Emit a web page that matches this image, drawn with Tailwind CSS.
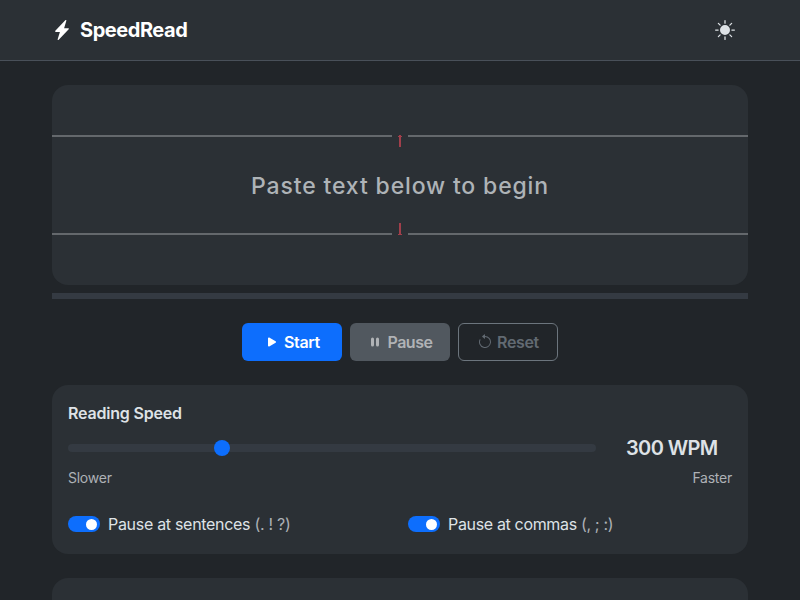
<!DOCTYPE html>
<html lang="en">
<head>
    <meta charset="UTF-8">
    <meta name="viewport" content="width=device-width, initial-scale=1.0">
    <title>SpeedRead</title>
    <script src="https://cdn.jsdelivr.net/npm/@tailwindcss/browser@4"></script>
</head>

<body class="flex flex-col bg-[#212529] text-[#dee2e6] h-screen overflow-hidden font-['Inter',sans-serif]">
    <header class="shrink-0 h-[61px] bg-[#2b3035] border-b border-[#495059]">
        <div class="flex items-center justify-between h-full px-[52px]">
            <a href="#" class="flex items-center text-white">
                <svg class="w-5 h-5 mr-2" viewBox="0 0 16 16" fill="currentColor">
                    <path d="M11.251.068a.5.5 0 0 1 .227.58L9.677 6.5H13a.5.5 0 0 1 .364.843l-8 8.5a.5.5 0 0 1-.842-.49L6.323 9.5H3a.5.5 0 0 1-.364-.843l8-8.5a.5.5 0 0 1 .615-.09z"/>
                </svg>
                <span class="text-xl font-bold tracking-[-0.45px]">SpeedRead</span>
            </a>
            <button type="button" class="mr-[13px]" aria-label="Theme">
                <svg class="w-5 h-5" viewBox="0 0 16 16" fill="currentColor">
                    <path d="M8 12a4 4 0 1 0 0-8 4 4 0 0 0 0 8M8 0a.5.5 0 0 1 .5.5v2a.5.5 0 0 1-1 0v-2A.5.5 0 0 1 8 0m0 13a.5.5 0 0 1 .5.5v2a.5.5 0 0 1-1 0v-2A.5.5 0 0 1 8 13m8-5a.5.5 0 0 1-.5.5h-2a.5.5 0 0 1 0-1h2a.5.5 0 0 1 .5.5M3 8a.5.5 0 0 1-.5.5h-2a.5.5 0 0 1 0-1h2A.5.5 0 0 1 3 8m10.657-5.657a.5.5 0 0 1 0 .707l-1.414 1.415a.5.5 0 1 1-.707-.708l1.414-1.414a.5.5 0 0 1 .707 0m-9.193 9.193a.5.5 0 0 1 0 .707L3.05 13.657a.5.5 0 0 1-.707-.707l1.414-1.414a.5.5 0 0 1 .707 0m9.193 2.121a.5.5 0 0 1-.707 0l-1.414-1.414a.5.5 0 0 1 .707-.707l1.414 1.414a.5.5 0 0 1 0 .707M4.464 4.465a.5.5 0 0 1-.707 0L2.343 3.05a.5.5 0 1 1 .707-.707l1.414 1.414a.5.5 0 0 1 0 .708"/>
                </svg>
            </button>
        </div>
    </header>

    <main class="flex flex-col flex-1 min-h-0 px-[52px] pt-6">
        <!-- reader -->
        <section class="flex flex-col shrink-0 justify-center h-[200px] bg-[#2b3035] rounded-2xl">
            <div class="flex items-start h-3">
                <div class="flex-1 h-0.5 bg-[#64686c]"></div>
                <svg class="w-4 h-3" viewBox="0 0 16 12" fill="#a03f4b">
                    <path d="M7 0h2v12H7zM6 1h4v1H6z"/>
                </svg>
                <div class="flex-1 h-0.5 bg-[#64686c]"></div>
            </div>
            <div class="flex items-center justify-center h-[76px] pt-0.5">
                <span class="text-[23px] font-medium tracking-[0.85px] text-[#aeb3b7]">Paste text below to begin</span>
            </div>
            <div class="flex items-end h-3">
                <div class="flex-1 h-0.5 bg-[#64686c]"></div>
                <svg class="w-4 h-3" viewBox="0 0 16 12" fill="#a03f4b">
                    <path d="M7 0h2v12H7zM6 11h4v1H6z"/>
                </svg>
                <div class="flex-1 h-0.5 bg-[#64686c]"></div>
            </div>
        </section>
        <div class="shrink-0 h-1.5 mt-2 bg-[#343a42]"></div>

        <!-- controls -->
        <div class="flex shrink-0 justify-center gap-2 mt-6">
            <button type="button" class="flex items-center justify-center w-[100px] h-[38px] rounded-md bg-[#0d6efd] text-white font-semibold">
                <svg class="w-4 h-4 mr-1" viewBox="0 0 16 16" fill="currentColor">
                    <path d="m11.596 8.697-6.363 3.692c-.54.313-1.233-.066-1.233-.697V4.308c0-.63.692-1.01 1.233-.696l6.363 3.692a.802.802 0 0 1 0 1.393"/>
                </svg>
                <span class="tracking-[-0.35px]">Start</span>
            </button>
            <button type="button" disabled class="flex items-center justify-center w-[100px] h-[38px] rounded-md bg-[#51585f] text-[#b0b3b6] font-semibold">
                <svg class="w-4 h-4 mr-1" viewBox="0 0 16 16" fill="currentColor">
                    <path d="M5.5 3.5A1.5 1.5 0 0 1 7 5v6a1.5 1.5 0 0 1-3 0V5a1.5 1.5 0 0 1 1.5-1.5m5 0A1.5 1.5 0 0 1 12 5v6a1.5 1.5 0 0 1-3 0V5a1.5 1.5 0 0 1 1.5-1.5"/>
                </svg>
                <span class="tracking-[-0.45px]">Pause</span>
            </button>
            <button type="button" disabled class="flex items-center justify-center w-[100px] h-[38px] rounded-md border border-[#6c757d] text-[#626a72] font-semibold">
                <svg class="w-4 h-4 mr-1" viewBox="0 0 16 16" fill="currentColor">
                    <path fill-rule="evenodd" d="M8 3a5 5 0 1 1-4.546 2.914.5.5 0 0 0-.908-.417A6 6 0 1 0 8 2z"/>
                    <path d="M8 4.466V.534a.25.25 0 0 0-.41-.192L5.23 2.308a.25.25 0 0 0 0 .384l2.36 1.966A.25.25 0 0 0 8 4.466"/>
                </svg>
                <span class="tracking-[-0.35px]">Reset</span>
            </button>
        </div>

        <!-- settings -->
        <section class="shrink-0 h-[169px] mt-6 p-4 bg-[#2b3035] rounded-2xl">
            <h2 class="font-semibold leading-6 tracking-[-0.2px]">Reading Speed</h2>
            <div class="flex items-center h-[30px] mt-2">
                <div class="flex items-center w-[528px] h-2 rounded-full bg-[#343a42]">
                    <div class="w-4 h-4 rounded-full bg-[#0d6efd]" style="margin-left: 146px"></div>
                </div>
                <div class="flex-1 pl-[30px] text-xl font-semibold whitespace-nowrap tracking-[-0.6px]">300 WPM</div>
            </div>
            <div class="flex justify-between mt-1 text-sm leading-[21px] tracking-[-0.25px] text-[#adb1b5]">
                <span>Slower</span>
                <span>Faster</span>
            </div>
            <div class="grid grid-cols-2 gap-4 mt-6">
                <label class="flex items-center h-6">
                    <span class="flex items-center justify-end w-8 h-4 pr-[3px] mr-2 rounded-full bg-[#0d6efd]"><span class="w-[11px] h-[11px] rounded-full bg-white"></span></span>
                    <span class="tracking-[-0.3px]">Pause at sentences <span class="text-[#adb1b5]">(. ! ?)</span></span>
                </label>
                <label class="flex items-center h-6">
                    <span class="flex items-center justify-end w-8 h-4 pr-[3px] mr-2 rounded-full bg-[#0d6efd]"><span class="w-[11px] h-[11px] rounded-full bg-white"></span></span>
                    <span class="tracking-[-0.34px]">Pause at commas <span class="text-[#adb1b5]">(, ; :)</span></span>
                </label>
            </div>
        </section>

        <!-- text input card -->
        <section class="flex-1 mt-6 bg-[#2b3035] rounded-t-2xl"></section>
    </main>
</body>
</html>
